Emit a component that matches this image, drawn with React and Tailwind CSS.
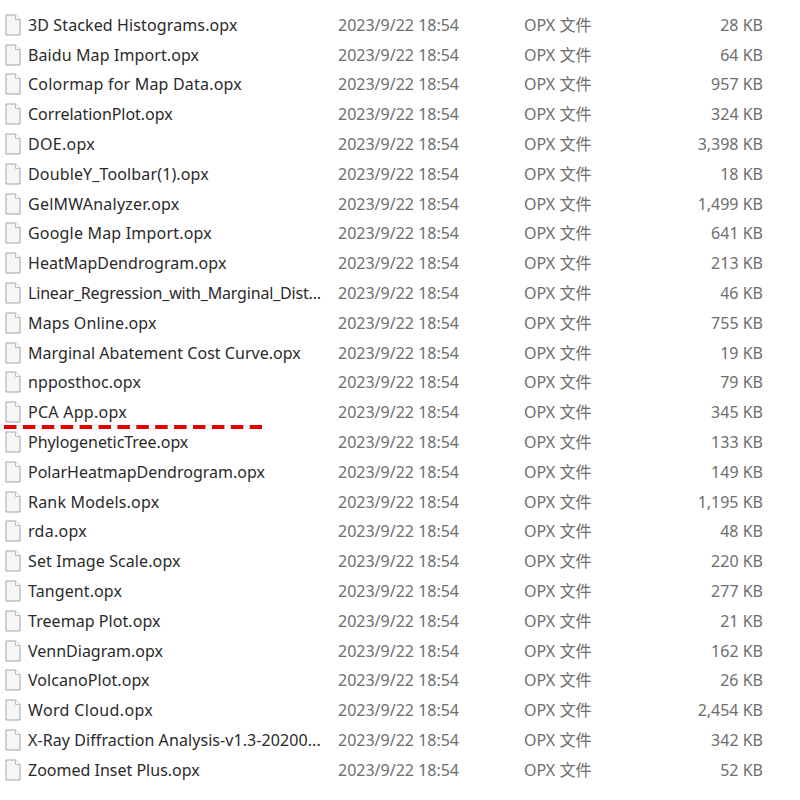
const rows = [
  ["3D Stacked Histograms.opx", "28 KB", "tracking-[0.12px]"],
  ["Baidu Map Import.opx", "64 KB", "tracking-[0.1px]"],
  ["Colormap for Map Data.opx", "957 KB", "tracking-[0.2px]"],
  ["CorrelationPlot.opx", "324 KB", "tracking-[-0.05px]"],
  ["DOE.opx", "3,398 KB", "tracking-[0.28px]"],
  ["DoubleY_Toolbar(1).opx", "18 KB", "tracking-[0.14px]"],
  ["GelMWAnalyzer.opx", "1,499 KB", "tracking-[0.24px]"],
  ["Google Map Import.opx", "641 KB", "tracking-[0.19px]"],
  ["HeatMapDendrogram.opx", "213 KB", "tracking-[0.05px]"],
  ["Linear_Regression_with_Marginal_Dist...", "46 KB", "tracking-[-0.18px]"],
  ["Maps Online.opx", "755 KB", "tracking-[0.13px]"],
  ["Marginal Abatement Cost Curve.opx", "19 KB", "tracking-[0.03px]"],
  ["npposthoc.opx", "79 KB", "tracking-[0.08px]"],
  ["PCA App.opx", "345 KB", "tracking-[0.27px]"],
  ["PhylogeneticTree.opx", "133 KB", "tracking-[-0.05px]"],
  ["PolarHeatmapDendrogram.opx", "149 KB", "tracking-normal"],
  ["Rank Models.opx", "1,195 KB", "tracking-[0.2px]"],
  ["rda.opx", "48 KB", "tracking-[0.28px]"],
  ["Set Image Scale.opx", "220 KB", "tracking-[0.1px]"],
  ["Tangent.opx", "277 KB", "tracking-[0.09px]"],
  ["Treemap Plot.opx", "21 KB", "tracking-[0.06px]"],
  ["VennDiagram.opx", "162 KB", "tracking-normal"],
  ["VolcanoPlot.opx", "26 KB", "tracking-[0.07px]"],
  ["Word Cloud.opx", "2,454 KB", "tracking-[0.36px]"],
  ["X-Ray Diffraction Analysis-v1.3-20200...", "342 KB", "tracking-[0.08px]"],
  ["Zoomed Inset Plus.opx", "52 KB", "tracking-normal"],
];

function FileIcon() {
  return (
    <svg width="16" height="22" viewBox="0 0 16 22" className="shrink-0">
      <path d="M1 1 H10.5 L15 5.5 V21 H1 Z" fill="#f6f6f6" stroke="#a3a3a3" strokeWidth="1" />
      <path d="M10.5 1 V5.5 H15" fill="#ffffff" stroke="#bdbdbd" strokeWidth="1" />
    </svg>
  );
}

export default function App() {
  return (
    <div className="relative w-[800px] h-[800px] bg-white overflow-hidden pt-[10px] font-['Noto_Sans','Noto_Sans_CJK_SC',sans-serif] text-[16px]">
      {rows.map(([name, size, tracking]) => (
        <div key={name} className="flex items-center h-[29.8px] pl-[5px] leading-none">
          <FileIcon />
          <div className={`w-[310px] ml-[7px] text-[#2a2a2a] whitespace-nowrap ${tracking}`}>{name}</div>
          <div className="w-[186px] text-[#6e6e6e] whitespace-nowrap">2023/9/22 18:54</div>
          <div className="w-[120px] text-[#6e6e6e] whitespace-nowrap">OPX 文件</div>
          <div className="w-[119px] text-right text-[#6e6e6e] whitespace-nowrap">{size}</div>
        </div>
      ))}
      <svg className="absolute left-[4px] top-[425px]" width="258" height="4">
        <line x1="0" y1="2" x2="258" y2="2" stroke="#e60000" strokeWidth="4" strokeDasharray="12.5 6.4" />
      </svg>
    </div>
  );
}
